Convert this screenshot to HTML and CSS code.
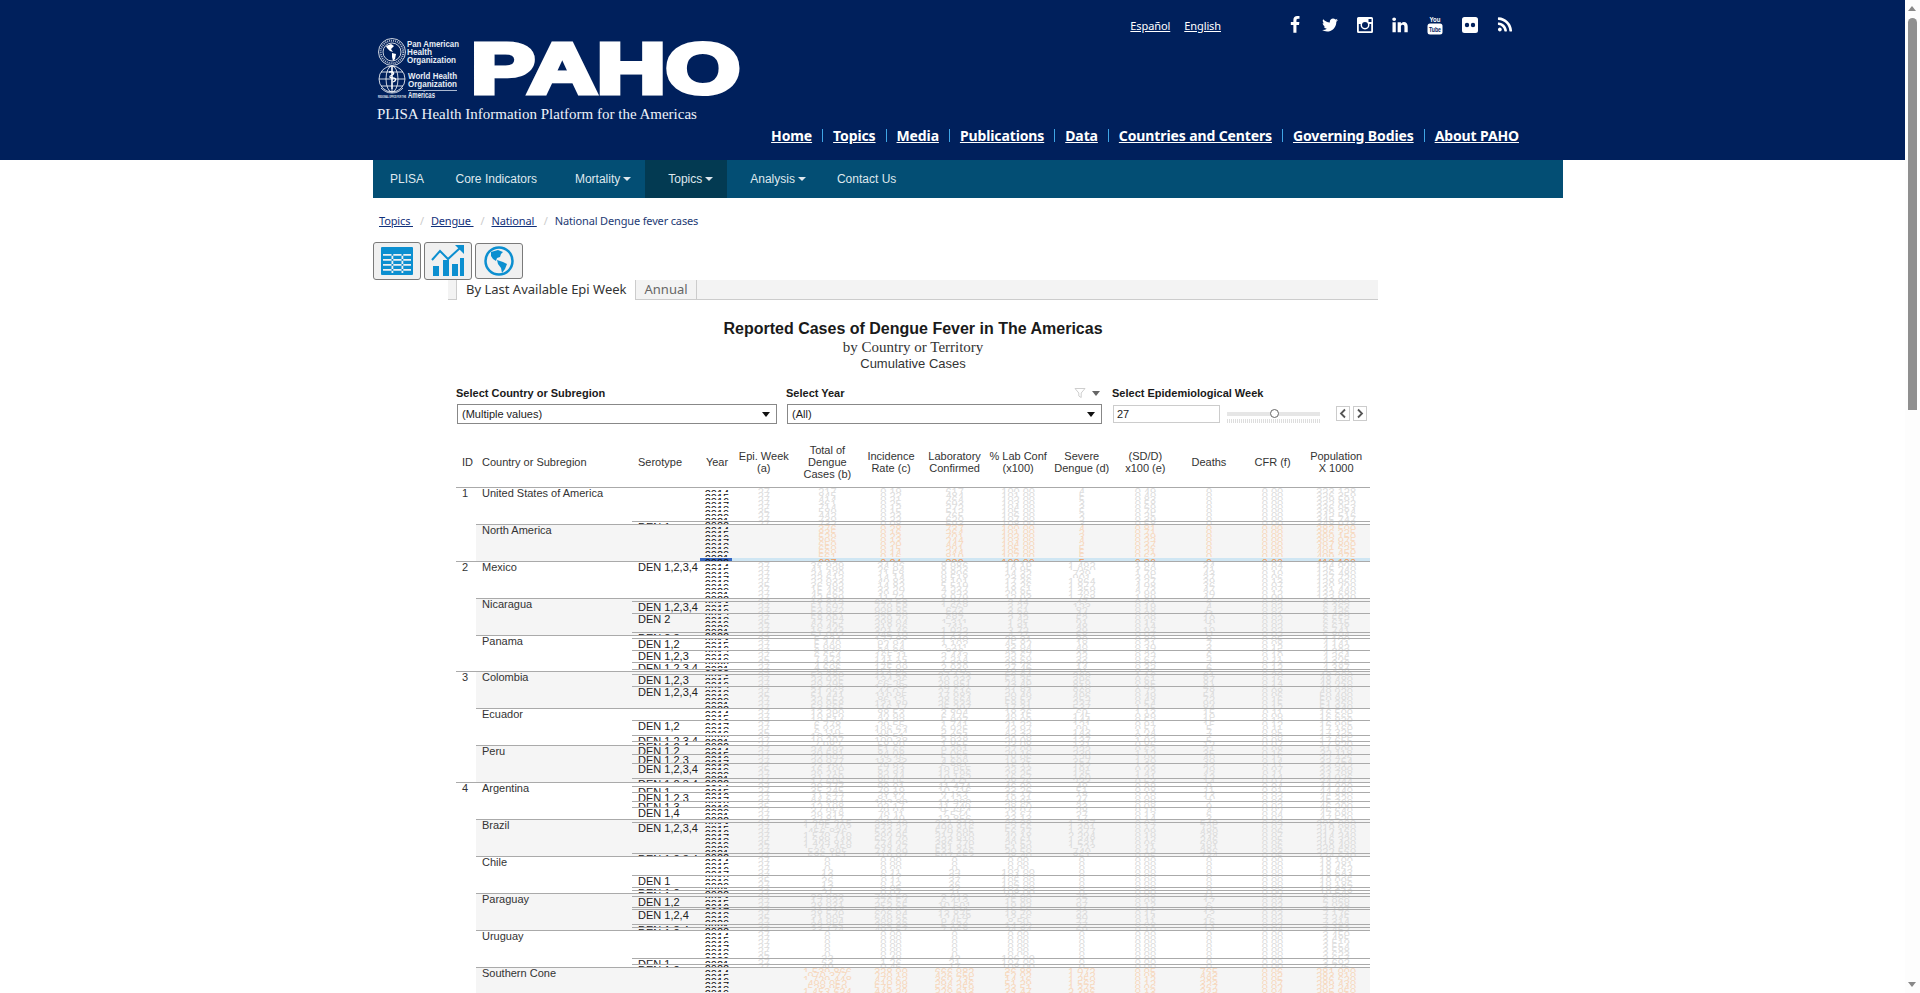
FILE: index.html
```html
<!DOCTYPE html>
<html lang="en">
<head>
<meta charset="utf-8">
<title>PLISA - National Dengue fever cases</title>
<link rel="stylesheet" href="styles.css">
</head>
<body>
<header class="masthead">
  <div class="masthead-inner">
    <div class="util-row">
      <div class="langs"><a href="#">Español</a><a href="#">English</a></div>
      <div class="social">
        <svg class="si" viewBox="0 0 1792 1792"><path d="M1343 12v264h-157q-86 0-116 36t-30 108v189h293l-39 296h-254v759h-306v-759h-255v-296h255v-218q0-186 104-288.500t277-102.500q147 0 228 12z"/></svg>
        <svg class="si" viewBox="0 0 1792 1792"><path d="M1684 408q-67 98-162 167 1 14 1 42 0 130-38 259.500t-115.500 248.500-184.500 210.500-258 146-323 54.500q-271 0-496-145 35 4 78 4 225 0 401-138-105-2-188-64.500t-114-159.500q33 5 61 5 43 0 85-11-112-23-185.500-111.500t-73.500-205.500v-4q68 38 146 41-66-44-105-115t-39-154q0-88 44-163 121 149 294.500 238.500t371.500 99.500q-8-38-8-74 0-134 94.500-228.500t228.500-94.500q140 0 236 102 109-21 205-78-37 115-142 178 92-10 184-50z"/></svg>
        <svg class="si" viewBox="0 0 18 18"><path fill-rule="evenodd" d="M2.500 1h13A1.500 1.500 0 0 1 17 2.500v13a1.500 1.500 0 0 1-1.500 1.500h-13A1.500 1.500 0 0 1 1 15.500v-13A1.500 1.500 0 0 1 2.500 1zM12.500 3v3h3V3zM2.800 8v7.200h12.400V8h-1.800a4.500 4.500 0 1 1-8.800 0zM9 6a3 3 0 1 0 0 6 3 3 0 0 0 0-6z"/></svg>
        <svg class="si" viewBox="0 0 1792 1792"><path d="M477 625v991h-330v-991h330zm21-306q1 73-50.500 122t-135.500 49h-2q-82 0-132-49t-50-122q0-74 51.500-122.500t134.500-48.500 133 48.500 51 122.500zm1166 729v568h-329v-530q0-105-40.500-164.500t-126.500-59.500q-63 0-105.500 34.500t-63.500 85.500q-11 30-11 81v553h-329q2-399 2-647t-1-296l-1-48h329v144h-2q20-32 41-56t56.500-52 87-43.500 114.500-15.500q171 0 275 113.500t104 332.500z"/></svg>
        <svg class="si tall" viewBox="0 0 18 20"><text class="yt-you" x="9" y="7" text-anchor="middle" textLength="11" lengthAdjust="spacingAndGlyphs">You</text><rect x="1.500" y="8.500" width="15" height="11" rx="2.500"/><text class="yt-tube" x="9" y="17.300" text-anchor="middle" textLength="12" lengthAdjust="spacingAndGlyphs">Tube</text></svg>
        <svg class="si" viewBox="0 0 18 18"><path fill-rule="evenodd" d="M3.500 1h11A2.500 2.500 0 0 1 17 3.500v11a2.500 2.500 0 0 1-2.500 2.500h-11A2.500 2.500 0 0 1 1 14.500v-11A2.500 2.500 0 0 1 3.500 1zM6 6.800a2.200 2.200 0 1 0 0 4.400 2.200 2.200 0 0 0 0-4.400zM12 6.800a2.200 2.200 0 1 0 0 4.400 2.200 2.200 0 0 0 0-4.400z"/></svg>
        <svg class="si" viewBox="0 0 1792 1792"><path d="M576 1344q0 80-56 136t-136 56-136-56-56-136 56-136 136-56 136 56 56 136zm512 123q2 28-17 48-18 21-47 21h-135q-25 0-43-16.500t-20-41.500q-22-229-184.500-391.500t-391.500-184.500q-25-2-41.500-20t-16.500-43v-135q0-29 21-47 17-17 43-17h5q160 13 306 80.500t259 181.500q114 113 181.500 259t80.500 306zm512 2q2 27-18 47-18 20-46 20h-143q-26 0-44.500-17.500t-19.500-42.500q-12-215-101-408.500t-231.500-336-336-231.500-408.500-102q-25-1-42.500-19.500t-17.500-43.500v-143q0-28 20-46 18-18 44-18h3q262 13 501.500 120t425.500 294q187 186 294 425.500t120 501.500z"/></svg>
      </div>
    </div>
    <svg class="logo" viewBox="0 0 364 64" role="img" aria-label="PAHO">
      <g class="emblem">
        <circle cx="15" cy="16" r="13.500"/><circle cx="15" cy="16" r="9"/>
        <circle class="dash" cx="15" cy="16" r="11.300"/>
        <path class="land" d="M9 10l5-2 3 2-3 3 2 3-3-1-3-3zM15 17l4 1-1 5-2 2-1-4z"/>
      </g>
      <g class="emblem">
        <circle cx="15" cy="43" r="13"/><ellipse cx="15" cy="43" rx="6" ry="13"/>
        <path d="M2 43h26M4 36h22M4 50h22M15 30v26"/>
        <path class="staff" d="M15 31v22M12 36c5-1 6 2 3 3s-3 3 1 3 3 3 0 4"/>
        <path d="M4 52c3 3 6 5 11 5s8-2 11-5"/>
      </g>
      <text class="lt" x="30" y="11" textLength="52" lengthAdjust="spacingAndGlyphs">Pan American</text>
      <text class="lt" x="30" y="19" textLength="25" lengthAdjust="spacingAndGlyphs">Health</text>
      <text class="lt" x="30" y="27" textLength="49" lengthAdjust="spacingAndGlyphs">Organization</text>
      <text class="lt" x="31" y="43" textLength="49" lengthAdjust="spacingAndGlyphs">World Health</text>
      <text class="lt" x="31" y="51" textLength="49" lengthAdjust="spacingAndGlyphs">Organization</text>
      <rect class="lw" x="31" y="54" width="49" height="0.800"/>
      <text class="lt small" x="1" y="62" textLength="28" lengthAdjust="spacingAndGlyphs">REGIONAL OFFICE FOR THE</text>
      <text class="lt" x="31" y="62" textLength="27" lengthAdjust="spacingAndGlyphs">Americas</text>
      <text class="wordmark" x="94" y="57" textLength="269" lengthAdjust="spacingAndGlyphs">PAHO</text>
    </svg>
    <div class="tagline">PLISA Health Information Platform for the Americas</div>
    <nav class="mainnav">
      <a href="#">Home</a><a href="#">Topics</a><a href="#">Media</a><a href="#">Publications</a><a href="#">Data</a><a href="#">Countries and Centers</a><a href="#">Governing Bodies</a><a href="#">About PAHO</a>
    </nav>
  </div>
</header>

<main class="shell">
  <nav class="sitenav">
    <a class="n-plisa" href="#">PLISA</a>
    <a class="n-core" href="#">Core Indicators</a>
    <a class="n-mort caret" href="#">Mortality</a>
    <a class="n-topics caret" href="#">Topics</a>
    <a class="n-ana caret" href="#">Analysis</a>
    <a class="n-contact" href="#">Contact Us</a>
  </nav>

  <ol class="crumbs">
    <li><a href="#">Topics&nbsp;</a></li>
    <li><a href="#">Dengue&nbsp;</a></li>
    <li><a href="#">National&nbsp;</a></li>
    <li>National Dengue fever cases</li>
  </ol>

  <div class="views">
    <button class="viewbtn">
      <svg viewBox="0 0 34 30"><rect class="b" x="1" y="1" width="32" height="28" rx="1"/><path class="w" d="M3 8h28v1.800H3zM3 13h28v1.800H3zM3 18h28v1.800H3zM3 23h28v1.800H3zM11.500 8v19h1.800V8zM21.500 8v19h1.800V8z"/></svg>
    </button>
    <button class="viewbtn">
      <svg viewBox="0 0 34 32"><path class="b" d="M2 21h6v10H2zM12 15h6v16h-6zM21 19h6v12h-6zM29 13h4v18h-4z"/><path class="ln" d="M1 15l8-9 8 8 12-11"/><path class="b" d="M24 0h9v9z"/></svg>
    </button>
    <button class="viewbtn small">
      <svg viewBox="0 0 32 32"><circle class="ring" cx="16" cy="16" r="13.500"/><path class="b" d="M8 7l7-2 5 2-2 2-1 3-3 1-1 3-3-2-2-3zM14 15l3 1 3 1 4 2-2 5-3 4-1-5-3-4z"/></svg>
    </button>
  </div>

  <div class="tabs">
    <span class="tab active">By Last Available Epi Week</span><span class="tab">Annual</span>
  </div>

  <section class="viz">
    <h1 class="t1">Reported Cases of Dengue Fever in The Americas</h1>
    <p class="t2">by Country or Territory</p>
    <p class="t3">Cumulative Cases</p>

    <div class="filters">
      <div class="flt f-country">
        <label>Select Country or Subregion</label>
        <div class="dd">(Multiple values)</div>
      </div>
      <div class="flt f-year">
        <div class="flt-head">
          <label>Select Year</label>
          <span class="flt-tools">
            <svg class="funnel" viewBox="0 0 12 12"><path d="M1 1.500h10L7.200 6v4.500L4.800 9V6z"/></svg>
            <span class="tri"></span>
          </span>
        </div>
        <div class="dd">(All)</div>
      </div>
      <div class="flt f-week">
        <label>Select Epidemiological Week</label>
        <div class="week">
          <div class="weekval">27</div>
          <div class="slider"><span class="thumb"></span></div>
          <div class="steps">
            <span class="step"><svg viewBox="0 0 12 12"><path d="M8 2L4 6l4 4"/></svg></span>
            <span class="step"><svg viewBox="0 0 12 12"><path d="M4 2l4 4-4 4"/></svg></span>
          </div>
        </div>
      </div>
    </div>

    <div class="thead">
      <span class="h h-id">ID</span>
      <span class="h h-country">Country or Subregion</span>
      <span class="h h-sero">Serotype</span>
      <span class="h h-year">Year</span>
      <span class="h h-m">Epi. Week<br>(a)</span>
      <span class="h h-m">Total of<br>Dengue<br>Cases (b)</span>
      <span class="h h-m">Incidence<br>Rate (c)</span>
      <span class="h h-m">Laboratory<br>Confirmed</span>
      <span class="h h-m">% Lab Conf<br>(x100)</span>
      <span class="h h-m">Severe<br>Dengue (d)</span>
      <span class="h h-m">(SD/D)<br>x100 (e)</span>
      <span class="h h-m">Deaths</span>
      <span class="h h-m">CFR (f)</span>
      <span class="h h-m">Population<br>X 1000</span>
    </div>
    <div class="tbody" id="tbody"></div>
  </section>
</main>

<div class="scrollbar" aria-hidden="true">
  <span class="arrow up"></span>
  <span class="sthumb"></span>
  <span class="arrow down"></span>
</div>
<script src="table.js"></script>
</body>
</html>
```
FILE: styles.css
```css
* { box-sizing: border-box; }
html, body { margin: 0; height: 993px; overflow: hidden; background: #fff; }
body { font-family: "Liberation Sans", Arial, sans-serif; color: #333; }

/* masthead */
.masthead { width: 1905px; height: 160px; background: #00205c; }
.masthead-inner { margin-left: 377px; width: 1142px; display: flex; flex-direction: column; }
.util-row { height: 36px; display: flex; justify-content: flex-end; padding-top: 15px; }
.langs { display: flex; gap: 14px; font: 11px/22px "Noto Sans", sans-serif; letter-spacing: -.1px; margin-right: 65px; }
.langs a { color: #fff; }
.social { display: flex; gap: 17px; margin: 1px 5px 0 0; height: 18px; align-items: center; }
.si { width: 18px; height: 18px; fill: #fff; display: block; }
.si.tall { height: 20px; }
.yt-you { font: bold 7px "Liberation Sans", sans-serif; fill: #fff; }
.yt-tube { font: bold 7.500px "Liberation Sans", sans-serif; fill: #00205c; }

.logo { width: 364px; height: 64px; display: block; }
.emblem circle, .emblem ellipse, .emblem path { fill: none; stroke: #fff; stroke-width: .8; }
.emblem .dash { stroke-dasharray: 1 1; stroke-width: 2; opacity: .7; }
.emblem .land { fill: #fff; stroke: none; }
.emblem .staff { stroke-width: 1.300; }
.lt { font: bold 8.500px "Liberation Sans", sans-serif; fill: #e8edf5; }
.lt.small { font-size: 3.500px; }
.lw { fill: #d8e0ee; }
.wordmark { font: bold 71px "Liberation Sans", sans-serif; fill: #fff; stroke: #fff; stroke-width: 5px; }
.tagline { font: 15px/20px "Liberation Serif", serif; color: #eef3fa; margin-top: 4px; }
.mainnav { display: flex; justify-content: flex-end; margin-top: 2px; font: bold 14px/20px "Noto Sans", sans-serif; letter-spacing: -.12px; }
.mainnav a { color: #fff; margin-left: 10px; text-decoration: underline; }
.mainnav a + a { padding-left: 11px; background: linear-gradient(#3fa6e6, #3fa6e6) left 3px / 1px 13px no-repeat; }

/* shell */
.shell { margin-left: 373px; width: 1190px; }
.sitenav { height: 38px; background: #034e74; display: flex; font-size: 12px; line-height: 38px; }
.sitenav a { color: #dfe8ee; text-decoration: none; display: block; white-space: nowrap; }
.n-plisa { padding: 0 16.500px 0 17px; }
.n-core { padding: 0 17px 0 15px; }
.n-mort { padding: 0 14px 0 21px; }
.n-topics { padding: 0 0 0 23px; background: #033a52; width: 82px; }
.n-ana { padding: 0 20px 0 23px; }
.n-contact { padding-left: 11px; }
.caret::after { content: ""; display: inline-block; margin-left: 3px; vertical-align: 2px; border: 4px solid transparent; border-top-color: #dfe8ee; border-bottom: 0; }

.crumbs { list-style: none; margin: 0; padding: 16px 0 0 6px; height: 44px; display: flex; font: 11px/14px "Noto Sans", sans-serif; letter-spacing: -.15px; color: #1d3a74; }
.crumbs a { color: #11307a; }
.crumbs li + li::before { content: "/"; color: #ccc; padding: 0 7px; }

.views { display: flex; gap: 3px; height: 38px; align-items: flex-start; }
.viewbtn { width: 48px; height: 38px; padding: 0; display: flex; align-items: center; justify-content: center; background: #f0f0f0; border: 1px solid #7a7a7a; border-radius: 3px; }
.viewbtn.small { height: 36px; margin-top: 1px; }
.viewbtn svg { width: 34px; height: 32px; }
.viewbtn .b { fill: #0c8fd0; }
.viewbtn .w { fill: #f0f0f0; }
.viewbtn .ln { fill: none; stroke: #0c8fd0; stroke-width: 2; }
.viewbtn .ring { fill: none; stroke: #0c8fd0; stroke-width: 2.500; }

.tabs { margin-left: 75px; width: 930px; height: 20px; background: #f3f3f3; border-bottom: 1px solid #ccc; padding-left: 8px; display: flex; font: 13px/19px "Noto Sans", sans-serif; }
.tab { padding: 0 8px 0 9px; color: #666; border-right: 1px solid #ccc; height: 19px; }
.tab.active { background: #fff; color: #333; border-left: 1px solid #ccc; padding: 0 8px 0 9px; height: 20px; }

.viz { margin-left: 83px; width: 914px; }
.t1 { margin: 19px 0 0; height: 20px; font: bold 16px/20px "Liberation Sans", sans-serif; color: #1a1a1a; text-align: center; width: 914px; }
.t2 { margin: 0; font: 15px/17px "Liberation Serif", serif; color: #333; text-align: center; }
.t3 { margin: 0; font: 13px/16px "Liberation Sans", sans-serif; color: #333; text-align: center; }

.filters { display: flex; margin-top: 14px; height: 52px; }
.flt label { display: block; font: bold 11px/14px "Liberation Sans", sans-serif; color: #1a1a1a; }
.f-country { width: 330px; }
.f-year { width: 326px; }
.flt-head { display: flex; justify-content: space-between; width: 315px; height: 14px; }
.flt-tools { display: flex; gap: 6px; align-items: center; margin-right: 1px; }
.funnel { width: 12px; height: 12px; fill: none; stroke: #c8c8c8; stroke-width: .9; }
.tri { width: 0; height: 0; border: 4px solid transparent; border-top: 5px solid #666; border-bottom: 0; }
.dd { margin-top: 4px; height: 20px; border: 1px solid #888; background: #fff; font-size: 11px; line-height: 18px; padding-left: 4px; color: #222; display: flex; justify-content: space-between; align-items: center; }
.f-country .dd { width: 320px; margin-left: 1px; }
.f-year .dd { width: 315px; margin-left: 1px; }
.dd::after { content: ""; border: 4px solid transparent; border-top: 5px solid #111; border-bottom: 0; margin-right: 6px; }
.week { display: flex; margin-top: 5px; margin-left: 1px; height: 18px; }
.weekval { width: 107px; height: 18px; border: 1px solid #ccc; font-size: 11px; line-height: 16px; padding-left: 3px; color: #222; }
.slider { width: 94px; height: 18px; margin-left: 7px; position: relative; background:
  linear-gradient(#e6e6e6, #e6e6e6) 0 7px / 93px 4px no-repeat,
  repeating-linear-gradient(to right, #ddd 0 1px, transparent 1px 2px) 0 14px / 94px 4px no-repeat; }
.thumb { position: absolute; left: 43px; top: 4px; width: 9px; height: 9px; border-radius: 50%; background: #fff; border: 1px solid #666; }
.steps { display: flex; gap: 3px; margin-left: 15px; margin-top: 1px; }
.step { width: 14px; height: 15px; border: 1px solid #ccc; display: block; }
.step svg { width: 12px; height: 13px; display: block; fill: none; stroke: #555; stroke-width: 1.800; }

.thead { display: flex; align-items: center; height: 50px; margin-top: -1px; font-size: 11px; line-height: 12px; color: #333; text-align: center; }
.h-id { width: 26px; text-align: left; padding-left: 6px; }
.h-country { width: 156px; text-align: left; }
.h-sero { width: 64px; text-align: left; }
.h-year { width: 30px; }
.h-m { width: 63.600px; }

.group { display: flex; height: 36.900px; }
.gid { width: 20px; border-top: 1px solid transparent; font-size: 11px; line-height: 10px; padding-left: 6px; }
.gid.lead { border-top-color: #aaa; }
.gbody { width: 894px; display: flex; border-top: 1px solid #aaa; }
.group.shade .gbody { background: #f5f5f5; }
.gname { width: 156px; padding-left: 6px; font-size: 11px; line-height: 10px; color: #333; }
.gseries { width: 738px; display: grid; grid-template-rows: 36px; overflow: hidden; }
.gseries > * { grid-area: 1 / 1; min-width: 0; min-height: 0; }
.cols { display: flex; padding-left: 70px; }
.col { width: 63.600px; text-align: center; color: #dcdcdc; font-size: 11px; }
.col.year { width: 30px; color: #111; }
.group.agg .col { color: #f7d8bd; }
.group.agg .col.year { color: #111; }
.col.blank { visibility: hidden; }
.ln4 { height: 4px; overflow: hidden; line-height: 9px; white-space: nowrap; }
.col.year .ln4 { line-height: 12px; }
.group.hl .ln4.end { color: #ef9c58; line-height: 12px; }
.group.hl .col.year .ln4.end { color: #111; }
.segs { display: flex; flex-direction: column; }
.seg { overflow: hidden; flex: none; padding-left: 6px; font-size: 11px; line-height: 11px; color: #222; }
.seg.ruled { border-top: 1px solid #aaa; }
.bluebar { align-self: end; height: 3px; margin-left: 68px; background: linear-gradient(to right, #3366c2 32px, #cfe6f3 32px); }

/* page scrollbar drawn over the page edge */
.scrollbar { position: fixed; top: 0; right: 0; width: 15px; height: 993px; background: #fdfdfd; }
.sthumb { position: absolute; left: 3px; top: 18px; width: 9px; height: 392px; background: #8f8f8f; border-radius: 5px 5px 0 0; }
.arrow { position: absolute; left: 3px; width: 0; height: 0; border: 4.500px solid transparent; }
.arrow.up { top: 6px; border-bottom: 5px solid #888; border-top: 0; }
.arrow.down { bottom: 6px; border-top: 5px solid #888; border-bottom: 0; }
```
FILE: table.js
```js
// name, id, shaded, aggregate, magnitudes [total, rate, lab, pct, severe, sd, deaths, cfr, pop], leading zero lines, serotype segments [offset, label, no-rule]
var GROUPS = [
  ["United States of America", "1", 0, 0, [620, 0.2, 560, 100, 4, 0.6, 0, 0, 323128], 0, [[33, "DEN 1"]]],
  ["North America", "", 1, 1, [620, 0.2, 560, 100, 4, 0.6, 0, 0, 382500], 0, []],
  ["Mexico", "2", 0, 0, [38000, 30, 6800, 18, 1300, 3.4, 40, 0.11, 124000], 0, [[0, "DEN 1,2,3,4", 1]]],
  ["Nicaragua", "", 1, 0, [43000, 680, 1200, 3, 90, 0.2, 8, 0.02, 6300], 0, [[2, "DEN 1,2,3,4"], [14, "DEN 2"], [33, "DEN 2,3"]]],
  ["Panama", "", 0, 0, [5200, 125, 1800, 35, 30, 0.6, 6, 0.11, 4100], 0, [[2, "DEN 1,2"], [14, "DEN 1,2,3"], [26, "DEN 1,2,3,4"], [33, "DEN 2,3"]]],
  ["Colombia", "3", 1, 0, [52000, 108, 22000, 42, 620, 1.2, 70, 0.14, 48000], 0, [[2, "DEN 1,2,3"], [14, "DEN 1,2,3,4"]]],
  ["Ecuador", "", 0, 0, [14000, 84, 4800, 34, 110, 0.8, 12, 0.09, 16500], 0, [[11, "DEN 1,2"], [26, "DEN 1,2,3,4"], [32, "DEN 1,2,4"]]],
  ["Peru", "", 1, 0, [26000, 82, 9600, 37, 280, 1.1, 30, 0.12, 31800], 0, [[0, "DEN 1,2", 1], [8, "DEN 1,2,3"], [17, "DEN 1,2,3,4"], [32, "DEN 1,2,3,4"]]],
  ["Argentina", "4", 0, 0, [32000, 72, 11000, 34, 40, 0.1, 9, 0.03, 44000], 0, [[3, "DEN 1"], [9, "DEN 1,2,3"], [18, "DEN 1,3"], [24, "DEN 1,4"]]],
  ["Brazil", "", 1, 0, [1249000, 610, 486000, 39, 1600, 0.13, 580, 0.05, 208000], 0, [[2, "DEN 1,2,3,4"], [33, "DEN 1,2,3,4"]]],
  ["Chile", "", 0, 0, [28, 0.1, 28, 100, 0, 0, 0, 0, 18100], 3, [[18, "DEN 1"], [30, "DEN 1,2"], [33, "DEN 1"]]],
  ["Paraguay", "", 1, 0, [41000, 620, 9800, 24, 70, 0.2, 12, 0.03, 6900], 0, [[2, "DEN 1,2"], [13, "DEN 1,2,3"], [15, "DEN 1,2,4"], [30, "DEN 1,3,4"], [33, "DEN 1,2"]]],
  ["Uruguay", "", 0, 0, [45, 1.3, 45, 100, 0, 0, 0, 0, 3450], 6, [[27, "DEN 1"], [33, "DEN 1,2"]]],
  ["Southern Cone", "", 1, 1, [1340000, 560, 510000, 38, 1700, 0.13, 600, 0.05, 281000], 0, []]
];
var YEARS = [2014, 2015, 2016, 2017, 2018, 2019, 2020, 2021, 2022];
var seed = 7;
function rnd() { seed = (seed * 16807) % 2147483647; return seed / 2147483647; }
function fmt(v, dec) {
  if (dec) return v.toFixed(2);
  return String(Math.round(v)).replace(/\B(?=(\d{3})+$)/g, " ");
}
var DEC = [0, 1, 0, 1, 0, 1, 0, 1, 0];
var LINES = 9;

function lineCol(cls, values, endIdx) {
  var col = document.createElement("div");
  col.className = "col " + cls;
  values.forEach(function (v, i) {
    var d = document.createElement("div");
    d.className = "ln4" + (i === endIdx ? " end" : "");
    d.textContent = v;
    col.appendChild(d);
  });
  return col;
}

var tbody = document.getElementById("tbody");
GROUPS.forEach(function (g) {
  var group = document.createElement("div");
  group.className = "group" + (g[2] ? " shade" : "") + (g[3] ? " agg" : "") + (g[0] === "North America" ? " hl" : "");

  var gid = document.createElement("div");
  gid.className = "gid" + (g[1] ? " lead" : "");
  gid.textContent = g[1];
  group.appendChild(gid);

  var body = document.createElement("div");
  body.className = "gbody";
  var name = document.createElement("div");
  name.className = "gname";
  name.textContent = g[0];
  body.appendChild(name);

  var series = document.createElement("div");
  series.className = "gseries";

  if (g[0] === "North America") {
    var bar = document.createElement("div");
    bar.className = "bluebar";
    series.appendChild(bar);
  }

  var cols = document.createElement("div");
  cols.className = "cols";

  var years = [];
  for (var y = 0; y < LINES; y++) years.push(YEARS[y % YEARS.length]);
  cols.appendChild(lineCol("year", years));

  var weeks = [];
  for (var w = 0; w < LINES; w++) weeks.push(w === 5 ? 35 : 27);
  cols.appendChild(lineCol("epi" + (g[3] ? " blank" : ""), weeks));

  g[4].forEach(function (m, idx) {
    var vals = [];
    for (var i = 0; i < LINES; i++) {
      var stable = idx === 3 && m === 100 || idx === 8;
      var v = stable ? m * (1 + i * 0.01) : m * (0.35 + rnd() * 1.1);
      if (i < g[5] && idx !== 8) v = 0;
      vals.push(fmt(v, DEC[idx]));
    }
    cols.appendChild(lineCol("m", vals, 8));
  });
  series.appendChild(cols);

  var segs = document.createElement("div");
  segs.className = "segs";
  var pos = 0;
  g[6].forEach(function (s, i) {
    var next = i + 1 < g[6].length ? g[6][i + 1][0] : 36;
    if (s[0] > pos) {
      var gap = document.createElement("div");
      gap.className = "seg";
      gap.style.height = (s[0] - pos) + "px";
      segs.appendChild(gap);
    }
    var seg = document.createElement("div");
    seg.className = "seg" + (s[2] ? "" : " ruled");
    seg.style.height = (next - s[0]) + "px";
    seg.textContent = s[1];
    segs.appendChild(seg);
    pos = next;
  });
  series.appendChild(segs);

  body.appendChild(series);
  group.appendChild(body);
  tbody.appendChild(group);
});
```
